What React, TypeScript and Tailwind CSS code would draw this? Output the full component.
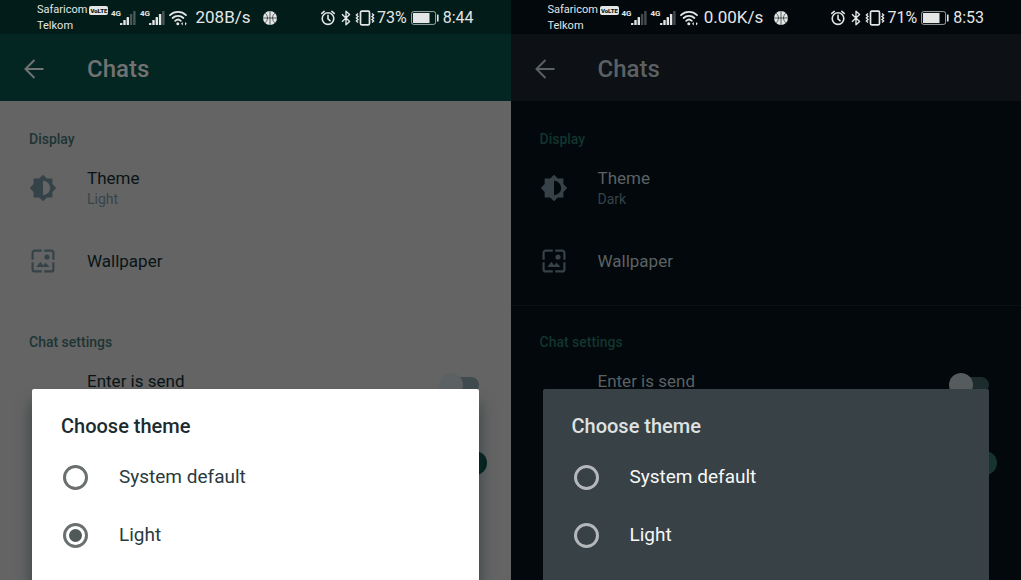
import clsx from "clsx";

type Variant = "light" | "dark";

const palettes = {
  light: {
    page: "bg-[#646464]",
    status: "bg-[#021c19]",
    bar: "bg-[#032622]",
    barText: "text-[#727272]",
    section: "text-[#1d3533]",
    title: "text-[#081416]",
    subtitle: "text-[#36444a]",
    icon: "text-[#354348]",
    divider: "border-transparent",
    track: "before:bg-[#3f4b4f]",
    thumb: "after:bg-[#5c6264]",
    trackOn: "before:bg-[#3f4b4f]",
    thumbOn: "after:bg-[#04231f]",
    dialog: "bg-white shadow-[0_14px_16px_rgba(20,40,45,0.6)]",
    dialogTitle: "text-[#1b2b2f]",
    option: "text-[#2b3a3e]",
    radio: "border-[#6a6f70]",
    dot: "checked:before:bg-[#50585a]",
  },
  dark: {
    page: "bg-[#02080b]",
    status: "bg-[#02080b]",
    bar: "bg-[#0d1014]",
    barText: "text-[#5b6163]",
    section: "text-[#12352f]",
    title: "text-[#5b6264]",
    subtitle: "text-[#374347]",
    icon: "text-[#364247]",
    divider: "border-[#0b1114]",
    track: "before:bg-[#1c2b2b]",
    thumb: "after:bg-[#565c5e]",
    trackOn: "before:bg-[#12352f]",
    thumbOn: "after:bg-[#173330]",
    dialog: "bg-[#374146]",
    dialogTitle: "text-[#dfe1e2]",
    option: "text-[#f7f8f8]",
    radio: "border-[#b4b8ba]",
    dot: "checked:before:bg-[#b4b8ba]",
  },
};

const Signal = ({ lit }: { lit: number }) => (
  <span className="flex items-start">
    <span className="w-[9px] text-[8px] leading-[8px] font-bold">4G</span>
    <svg width="16" height="16" viewBox="0 0 16 16" fill="currentColor">
      {[2, 5, 8, 11, 14].map((h, i) => (
        <rect key={i} x={i * 3.3} y={15 - h} width="2.4" height={h} rx="0.5" opacity={i < lit ? 1 : 0.3} />
      ))}
    </svg>
  </span>
);

const WifiIcon = () => (
  <svg width="18" height="16" viewBox="0 0 18 16" fill="none" stroke="currentColor" strokeWidth="1.8" strokeLinecap="round">
    <path d="M1 5.2a11.5 11.5 0 0 1 16 0" />
    <path d="M3.6 8a7.8 7.8 0 0 1 10.8 0" />
    <path d="M6.2 10.8a4.2 4.2 0 0 1 5.6 0" />
    <circle cx="8.8" cy="13.7" r="1.5" fill="currentColor" stroke="none" />
    <path d="m12 13.8 1.8-1.8v3.6zM17.8 13.8 16 12v3.6z" fill="currentColor" stroke="none" />
  </svg>
);

const BallIcon = () => (
  <svg width="14" height="14" viewBox="0 0 14 14">
    <circle cx="7" cy="7" r="7" fill="currentColor" />
    <g fill="none" stroke="#1b2524" strokeWidth="0.7">
      <path d="M7 0v14M0 7h14M2.2 2.2c3 2.6 3 7 0 9.6M11.8 2.2c-3 2.6-3 7 0 9.6" />
    </g>
  </svg>
);

const AlarmIcon = () => (
  <svg width="14" height="16" viewBox="0 0 14 16" fill="none" stroke="currentColor" strokeWidth="1.6" strokeLinecap="round">
    <circle cx="7" cy="8.6" r="5.8" />
    <path d="M7 5.4v3.4l2 1.8M.8 3.4 3.2 1.4M13.2 3.4l-2.4-2" />
  </svg>
);

const BluetoothIcon = () => (
  <svg width="10" height="16" viewBox="0 0 10 16" fill="none" stroke="currentColor" strokeWidth="1.4" strokeLinejoin="round">
    <path d="m1 4.3 7.6 7.2L5 14.8V1.2l3.6 3.3L1 11.7" />
  </svg>
);

const VibrateIcon = () => (
  <svg width="20" height="16" viewBox="0 0 20 16" fill="none" stroke="currentColor">
    <rect x="5.5" y="1.2" width="9" height="13.6" rx="1.2" strokeWidth="1.7" />
    <path
      d="M3 3.5 1.4 5 3 6.5 1.4 8 3 9.5 1.4 11 3 12.5M17 3.5 18.6 5 17 6.5 18.6 8 17 9.5 18.6 11 17 12.5"
      strokeWidth="1.4"
    />
  </svg>
);

const BatteryIcon = () => (
  <svg width="28" height="14" viewBox="0 0 28 14">
    <rect x="0.6" y="0.6" width="24" height="12.8" rx="2" fill="none" stroke="currentColor" opacity="0.7" />
    <rect x="2" y="2" width="16.5" height="10" fill="currentColor" />
    <rect x="26" y="3.5" width="1.6" height="7" rx="0.5" fill="currentColor" />
  </svg>
);

const BackIcon = () => (
  <svg width="20" height="20" viewBox="0 0 20 20" fill="none" stroke="currentColor" strokeWidth="2">
    <path d="M19.5 10h-18M10.5 1l-9 9 9 9" />
  </svg>
);

const ThemeIcon = () => (
  <svg width="28" height="28" viewBox="0 0 28 28" fill="currentColor" fillRule="evenodd">
    <path d="M14 .8l3.9 3.8h5.5v5.5l3.8 3.9-3.8 3.9v5.5h-5.5L14 27.2l-3.9-3.8H4.6v-5.5L.8 14l3.8-3.9V4.6h5.5zM14 6.8v14.4a7.2 7.2 0 0 0 0-14.4z" />
  </svg>
);

const WallpaperIcon = () => (
  <svg width="24" height="24" viewBox="0 0 24 24" fill="none" stroke="currentColor" strokeWidth="2.2">
    <path d="M10.8 1.6H3.6a2 2 0 0 0-2 2v7.2M13.2 1.6h7.2a2 2 0 0 1 2 2v7.2M10.8 22.4H3.6a2 2 0 0 1-2-2v-7.2M13.2 22.4h7.2a2 2 0 0 0 2-2v-7.2" />
    <path d="m5.4 18 4-5.2 2.8 3.6 2.2-2.8 4.2 4.4z" fill="currentColor" stroke="none" />
    <circle cx="16" cy="8" r="2.6" fill="currentColor" stroke="none" />
  </svg>
);

const switchBase =
  "relative block h-6 w-12 shrink-0 appearance-none before:absolute before:inset-x-2 before:inset-y-1 before:rounded-full after:absolute after:top-0 after:size-6 after:rounded-full";

const Phone = ({ variant, speed, battery, time, theme }: {
  variant: Variant;
  speed: string;
  battery: string;
  time: string;
  theme: string;
}) => {
  const c = palettes[variant];

  return (
    <div className={clsx("relative min-h-screen flex-1 overflow-hidden", c.page)}>
      {/* Status bar */}
      <div className={clsx("flex h-[34px] items-center justify-between px-[37px] pt-0.5 text-[#e4e6e6]", c.status)}>
        <div className="flex shrink-0 items-center">
          <div className="w-[74px] shrink-0 text-[11px] leading-4">
            <div className="flex items-center gap-0.5">
              <span>Safaricom</span>
              <span className="rounded-xs bg-[#e4e6e6] px-px text-[6px] leading-[9px] font-black text-[#0b1716]">VoLTE</span>
            </div>
            <div>Telkom</div>
          </div>
          <div className="flex items-center gap-1">
            <Signal lit={3} />
            <Signal lit={4} />
            <WifiIcon />
          </div>
          <span className="mr-2 ml-1 w-16 text-center text-[17px]">{speed}</span>
          <BallIcon />
        </div>
        <div className="flex shrink-0 items-center text-base">
          <AlarmIcon />
          <span className="ml-1.5"><BluetoothIcon /></span>
          <span className="ml-1"><VibrateIcon /></span>
          <span className="ml-0.5">{battery}</span>
          <span className="mx-1"><BatteryIcon /></span>
          <span>{time}</span>
        </div>
      </div>

      {/* App bar */}
      <header className={clsx("flex h-[67px] items-center gap-[43px] pt-0.5 pl-6", c.bar, c.barText)}>
        <button type="button" aria-label="Back">
          <BackIcon />
        </button>
        <h1 className="text-2xl font-medium">Chats</h1>
      </header>

      {/* Settings list */}
      <main>
        <section className={clsx("h-[205px] border-b pt-7", c.divider)}>
          <h2 className={clsx("px-[29px] text-sm font-medium", c.section)}>Display</h2>
          <button type="button" className="mt-[18px] flex w-full items-center pl-[29px] text-left">
            <span className={clsx("w-[58px]", c.icon)}><ThemeIcon /></span>
            <span>
              <span className={clsx("block text-[17px] leading-[22px]", c.title)}>Theme</span>
              <span className={clsx("block text-sm leading-5", c.subtitle)}>{theme}</span>
            </span>
          </button>
          <button type="button" className="mt-10 flex w-full items-center pl-[31px] text-left">
            <span className={clsx("w-14", c.icon)}><WallpaperIcon /></span>
            <span className={clsx("text-[17px] leading-6", c.title)}>Wallpaper</span>
          </button>
        </section>
        <section className="pt-[26px]">
          <h2 className={clsx("px-[29px] text-sm font-medium", c.section)}>Chat settings</h2>
          <label className="mt-[17px] flex h-8 items-center justify-between pr-6 pl-[87px]">
            <span className={clsx("pb-1.5 text-[17px]", c.title)}>Enter is send</span>
            <input type="checkbox" className={clsx(switchBase, "after:left-0", c.track, c.thumb)} />
          </label>
          <div className="mt-[46px] flex h-8 items-center justify-end pr-6">
            <input
              type="checkbox"
              defaultChecked
              aria-label="Media visibility"
              className={clsx(switchBase, "after:right-0", c.trackOn, c.thumbOn)}
            />
          </div>
        </section>
      </main>

      {/* Theme picker */}
      <div
        role="dialog"
        aria-labelledby={`${variant}-title`}
        className={clsx("absolute inset-x-8 bottom-0 rounded-t-xs px-[29px] pt-[21px] pb-4", c.dialog)}
      >
        <h2 id={`${variant}-title`} className={clsx("mb-1.5 text-xl leading-8 font-medium", c.dialogTitle)}>
          Choose theme
        </h2>
        {["System default", "Light"].map((name) => (
          <label key={name} className={clsx("flex h-[58px] items-center gap-[31px] pl-0.5 text-[19px]", c.option)}>
            <input
              type="radio"
              name={`${variant}-theme`}
              defaultChecked={variant === "light" && name === "Light"}
              className={clsx(
                "flex size-[25px] appearance-none items-center justify-center rounded-full border-3 checked:before:size-[13px] checked:before:rounded-full",
                c.radio,
                c.dot,
              )}
            />
            {name}
          </label>
        ))}
      </div>
    </div>
  );
};

const App = () => (
  <div className="flex min-h-screen w-full font-[Roboto,sans-serif]">
    <Phone variant="light" speed="208B/s" battery="73%" time="8:44" theme="Light" />
    <Phone variant="dark" speed="0.00K/s" battery="71%" time="8:53" theme="Dark" />
  </div>
);

export default App;
